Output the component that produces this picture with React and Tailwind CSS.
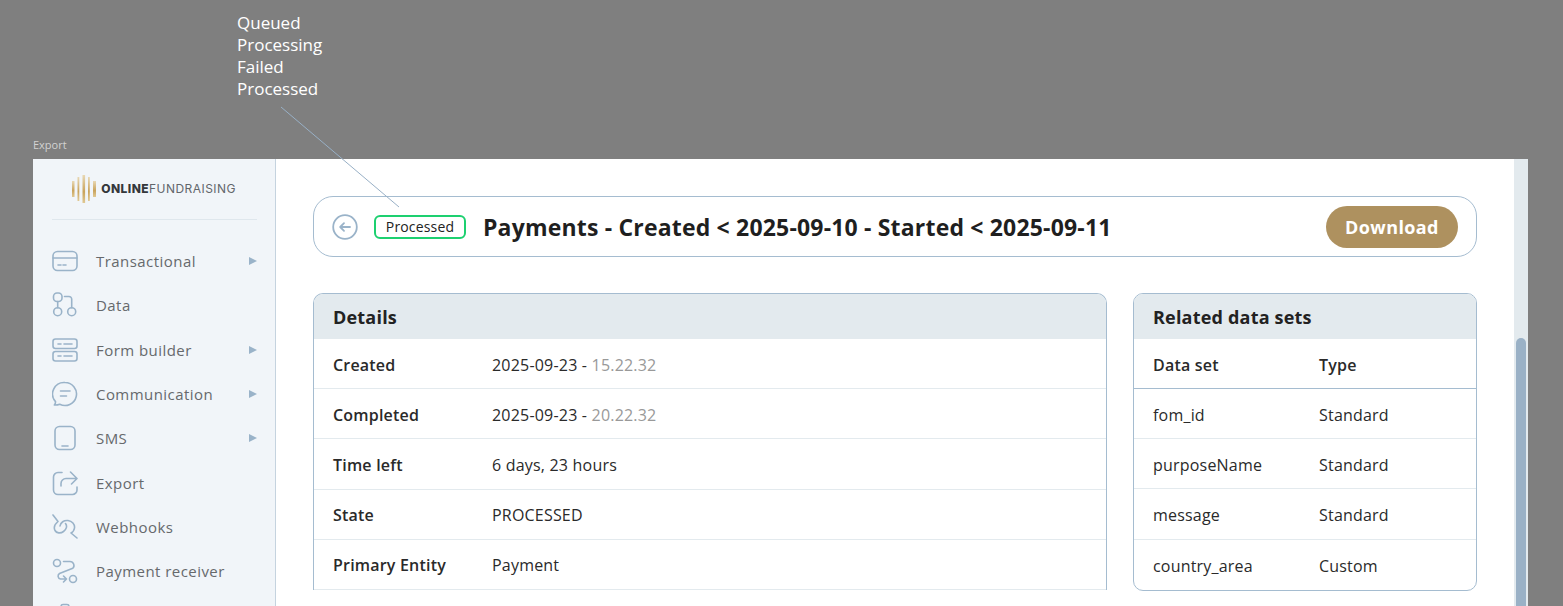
const Icon = ({ children }) => (
    <svg width="26" height="26" viewBox="0 0 26 26" fill="none" stroke="#9ab3c9" strokeWidth="1.6" strokeLinecap="round" strokeLinejoin="round" className="shrink-0">
        {children}
    </svg>
);

const menu = [
    {
        label: "Transactional",
        arrow: true,
        icon: (
            <>
                <rect x="1" y="3.5" width="24" height="19" rx="4.5" />
                <path d="M1 10h24M6 17h3M11 17h3" />
            </>
        ),
    },
    {
        label: "Data",
        icon: (
            <>
                <rect x="1.500" y="1" width="8.500" height="8.500" rx="3.500" />
                <circle cx="5.700" cy="19.700" r="4" />
                <circle cx="19.700" cy="19.700" r="4" />
                <path d="M5.700 9.500v6.200M12.500 4.500h4.500a2.700 2.700 0 0 1 2.700 2.700v8.500" />
            </>
        ),
    },
    {
        label: "Form builder",
        arrow: true,
        icon: (
            <>
                <rect x="1" y="2" width="24" height="9.5" rx="2.5" />
                <rect x="1" y="14.5" width="24" height="9.5" rx="2.5" />
                <path d="M6 7h3M12 7h8M6 19h3M12 19h8" />
            </>
        ),
    },
    {
        label: "Communication",
        arrow: true,
        icon: (
            <>
                <path d="M13 1.5a11.5 11.5 0 1 1-5.3 21.7c-1.7.7-3.7 1-5.4.8 1-.9 1.3-2 1.2-3.4A11.5 11.5 0 0 1 13 1.5Z" />
                <path d="M8.5 10h9.5M8.5 15h6" />
            </>
        ),
    },
    {
        label: "SMS",
        arrow: true,
        icon: (
            <>
                <rect x="3" y="1.5" width="20" height="23" rx="4.5" />
                <path d="M10 21h6" />
            </>
        ),
    },
    {
        label: "Export",
        icon: (
            <>
                <path d="M10 2.5H6A4.5 4.5 0 0 0 1.500 7v13A4.500 4.500 0 0 0 6 24.500h14.500A4.500 4.500 0 0 0 25 20v-3" />
                <path d="M9 16v-2.500A5 5 0 0 1 14 8.500h10.500M18.500 2l6.500 6.500-5.500 5.500" />
            </>
        ),
    },
    {
        label: "Webhooks",
        icon: (
            <>
                <path d="M1 1l5 6.500c-3 2.500-4.500 6-3 9 1.500 2.700 5.500 3.200 8.500 1 3-2.200 4-5.500 2-8" />
                <path d="M8 12c.5-3.500 4-6 8-5.500 4 .5 7 3.500 6.500 7.500-.3 2.200-1.500 4-3.500 5l6 5" />
            </>
        ),
    },
    {
        label: "Payment receiver",
        icon: (
            <>
                <circle cx="5" cy="5" r="3.500" />
                <circle cx="21" cy="21" r="3.500" />
                <path d="M11.500 3.500h6.500a4 4 0 0 1 2.800 6.800L7.500 15.500a3 3 0 0 0 1 5.500h6M11.500 18l3 3-3 3" />
            </>
        ),
    },
    {
        label: "",
        icon: (
            <>
                <rect x="9" y="1.500" width="8" height="8" rx="2" />
                <path d="M13 9.500v5M4 20v-3a2 2 0 0 1 2-2h14a2 2 0 0 1 2 2v3" />
            </>
        ),
    },
];

const details = [
    { label: "Created", value: "2025-09-23 - ", time: "15.22.32" },
    { label: "Completed", value: "2025-09-23 - ", time: "20.22.32" },
    { label: "Time left", value: "6 days, 23 hours" },
    { label: "State", value: "PROCESSED" },
    { label: "Primary Entity", value: "Payment" },
];

const dataSets = [
    { name: "fom_id", type: "Standard" },
    { name: "purposeName", type: "Standard" },
    { name: "message", type: "Standard" },
    { name: "country_area", type: "Custom" },
];

const Logo = () => (
    <div className="flex h-[61px] items-center justify-center border-b border-[#dfe7ed] pl-[37px] pr-[39px]">
        <svg width="26" height="28" viewBox="0 0 26 28" className="shrink-0">
            <defs>
                <linearGradient id="gold" x1="0" y1="0" x2="0" y2="1">
                    <stop offset="0" stopColor="#e8d8b4" />
                    <stop offset="0.6" stopColor="#c9a35c" />
                    <stop offset="1" stopColor="#e0c994" />
                </linearGradient>
            </defs>
            <rect x="1" y="6" width="2.500" height="16" fill="url(#gold)" />
            <rect x="6.500" y="2" width="1.800" height="24" fill="url(#gold)" />
            <rect x="11.500" y="0" width="2.600" height="28" fill="url(#gold)" />
            <rect x="17" y="2" width="1.800" height="24" fill="url(#gold)" />
            <rect x="22" y="6" width="3" height="16" fill="url(#gold)" />
        </svg>
        <span className="ml-[4px] whitespace-nowrap font-['Inter',sans-serif] text-[12px] leading-none tracking-[0.45px] text-[#62666b]">
            <span className="font-extrabold text-[#34373b]">ONLINE</span>FUNDRAISING
        </span>
    </div>
);

const App = () => {
    return (
        <div className="relative h-[606px] w-[1563px] overflow-hidden bg-[#7f7f7f] font-['Open_Sans',sans-serif]">
            <svg width="130" height="110" className="absolute left-[275px] top-[102px] z-10">
                <path d="M6 5L124 105" stroke="#98b0c6" strokeWidth="1" fill="none" />
            </svg>

            <div className="h-[159px] pt-[12px]">
                <ul className="ml-[237px] text-[17px] leading-[22px] text-white">
                    <li>Queued</li>
                    <li>Processing</li>
                    <li>Failed</li>
                    <li>Processed</li>
                </ul>
                <div className="ml-[33px] mt-[37px] text-[11px] leading-4 text-[#d2d2d2]">Export</div>
            </div>

            <div className="mx-[33px] mr-[35px] flex h-[447px] overflow-hidden bg-white">
                {/* Sidebar */}
                <aside className="w-[243px] shrink-0 border-r border-[#c5d3df] bg-[#f1f5f9] pl-[19px] pr-[18px]">
                    <Logo />
                    <nav className="mt-[19px]">
                        {menu.map((item, idx) => (
                            <div key={idx} className="flex h-[44.33px] items-center">
                                <Icon>{item.icon}</Icon>
                                <span className="ml-[18px] flex-1 text-[15px] font-medium tracking-[0.45px] text-[#66696c]">{item.label}</span>
                                {item.arrow && <span className="h-0 w-0 border-y-[4px] border-l-[8px] border-y-transparent border-l-[#9ab3c9]" />}
                            </div>
                        ))}
                    </nav>
                </aside>

                {/* Main */}
                <main className="flex-1 px-[37px] pt-[37px]">
                    <div className="flex h-[61px] items-center rounded-[20px] border border-[#a5bcd0] pl-[18px] pr-[18px]">
                        <svg width="26" height="26" viewBox="0 0 26 26" fill="none" stroke="#9ab3c9" strokeWidth="1.800" strokeLinecap="round" strokeLinejoin="round" className="shrink-0">
                            <circle cx="13" cy="13" r="11.800" />
                            <path d="M18 13H8.500M12 9.200L8.200 13l3.800 3.800" />
                        </svg>
                        <span className="ml-[16px] flex h-6 w-[92px] items-center justify-center rounded-[6px] border-2 border-[#1dd070] text-sm tracking-[0.15px] text-[#222]">Processed</span>
                        <h1 className="ml-[17px] flex-1 pt-px text-[23px] font-bold tracking-[0.18px] text-[#1f1f1f]">Payments - Created &lt; 2025-09-10 - Started &lt; 2025-09-11</h1>
                        <button className="h-[42px] w-[132px] rounded-[21px] bg-[#ae915f] text-lg font-bold tracking-[0.4px] text-white">Download</button>
                    </div>

                    <div className="mt-[36px] flex items-start gap-[26px]">
                        <section className="w-[794px] shrink-0 overflow-hidden rounded-t-[10px] border border-b-0 border-[#a5bcd0]">
                            <h2 className="flex h-[45px] items-center bg-[#e3eaee] pl-[19px] text-lg font-bold tracking-[0.2px] text-[#222]">Details</h2>
                            {details.map((row) => (
                                <div key={row.label} className="flex h-[50.200px] items-center border-b border-[#e3eaee] pl-[19px] pt-[2px] text-base tracking-[0.2px] text-[#2a2a2a]">
                                    <span className="w-[159px] font-semibold">{row.label}</span>
                                    <span>
                                        {row.value}
                                        {row.time && <span className="text-[#999]">{row.time}</span>}
                                    </span>
                                </div>
                            ))}
                        </section>

                        <section className="w-[344px] shrink-0 overflow-hidden rounded-[10px] border border-[#a5bcd0]">
                            <h2 className="flex h-[45px] items-center bg-[#e3eaee] pl-[19px] text-lg font-bold tracking-[0.2px] text-[#222]">Related data sets</h2>
                            <div className="flex h-[50px] items-center border-b border-[#a5bcd0] pl-[19px] pt-[2px] text-base font-semibold tracking-[0.2px] text-[#2a2a2a]">
                                <span className="w-[166px]">Data set</span>
                                <span>Type</span>
                            </div>
                            {dataSets.map((row) => (
                                <div key={row.name} className="flex h-[50.200px] items-center border-b border-[#e3eaee] pl-[19px] pt-[2px] text-base tracking-[0.2px] text-[#2a2a2a] last:border-b-0">
                                    <span className="w-[166px]">{row.name}</span>
                                    <span>{row.type}</span>
                                </div>
                            ))}
                        </section>
                    </div>
                </main>

                {/* Scrollbar */}
                <div className="flex w-[14px] shrink-0 justify-center bg-[#e3eaee] pt-[179px]">
                    <div className="h-full w-[10px] rounded-t-[5px] bg-[#9ab1c6]" />
                </div>
            </div>
        </div>
    );
};

export default App;
